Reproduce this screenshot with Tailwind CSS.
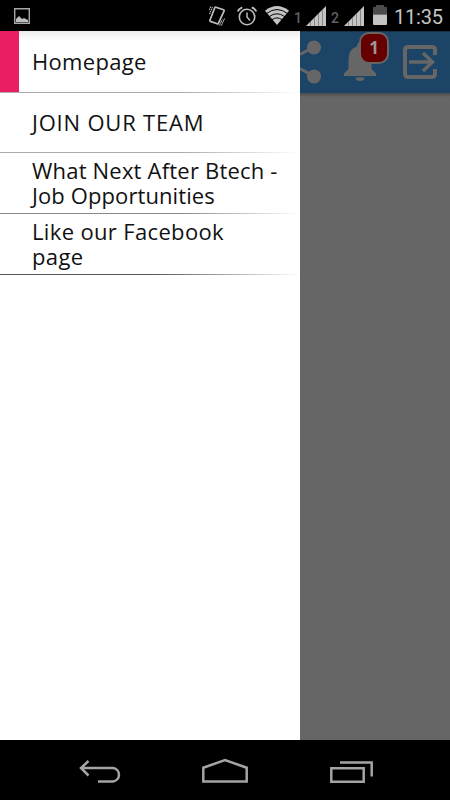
<!DOCTYPE html>
<html lang="en">
<head>
    <meta charset="UTF-8">
    <meta name="viewport" content="width=device-width, initial-scale=1.0">
    <title>Homepage</title>
    <script src="https://cdn.jsdelivr.net/npm/@tailwindcss/browser@4"></script>
</head>
<body class="w-[450px] h-[800px] overflow-hidden bg-black flex flex-col font-['Open_Sans',sans-serif]">
    <!-- Status bar -->
    <header class="h-[31px] shrink-0 bg-black flex items-start text-[#c4c4c4] font-[Roboto,sans-serif]">
        <svg class="w-4 h-4 ml-[14px] mt-2" viewBox="0 0 16 16">
            <path d="M.7.7h14.6v14.6H.7z" fill="none" stroke="#a8a8a8" stroke-width="1.4"/>
            <path d="M2 14v-3l2-2 1-1 2 2 1 1 2-1 2 1 2 1v2z" fill="#bdbdbd"/>
        </svg>
        <svg class="w-[18px] h-[22px] ml-[178px] mt-[5px]" viewBox="0 0 18 22" fill="none" stroke="#bdbdbd">
            <path d="M8 2.2l7.5 2.6q1 .4.5 1.4l-5.500 12q-.4 1-1.400.6L2.500 16.400q-1-.4-.5-1.400L6.700 3Q7 1.900 8 2.200z" stroke-width="1.700"/>
            <path d="M4.500 2L1.500 9M2.700 1.500L1 5.500M13.500 20.500l3-7M11.500 20.500l3-6" stroke-width="1.100" stroke-dasharray="1.500 .6"/>
        </svg>
        <svg class="w-5 h-5 ml-[11px] mt-[6px]" viewBox="0 0 20 20" fill="none" stroke="#bdbdbd">
            <circle cx="10" cy="11" r="7.700" stroke-width="1.600"/>
            <path d="M10 6.500V11l3 3.500" stroke-width="1.500"/>
            <path d="M.7 5.500Q2 2.500 5.300 1.400M19.300 5.500Q18 2.500 14.700 1.400" stroke-width="1.800"/>
        </svg>
        <svg class="w-6 h-[19px] ml-[8px] mt-[6px]" viewBox="0 0 24 19">
            <path d="M0 4.700Q12-4.500 24 4.700L12 19z" fill="#c4c4c4"/>
            <path d="M1.800 7.300Q12-.2 22.200 7.300M4.400 10.500Q12 5 19.600 10.500M7 13.600Q12 10.200 17 13.600" fill="none" stroke="#000" stroke-width="1"/>
        </svg>
        <span class="w-[8px] ml-[5px] mt-[10px] text-sm leading-4 font-medium text-[#606060]">1</span>
        <svg class="w-5 h-5 ml-[4px] mt-[6px]" viewBox="0 0 20 20">
            <path d="M0 20L20 0v20z" fill="#c4c4c4"/>
            <path d="M4.500 16v4M8.500 12v8M12.500 8v12M16.500 4v16" stroke="#777" stroke-width=".8"/>
        </svg>
        <span class="w-[9px] ml-[5px] mt-[10px] text-sm leading-4 font-medium text-[#606060]">2</span>
        <svg class="w-5 h-5 ml-[4px] mt-[6px]" viewBox="0 0 20 20">
            <path d="M0 20L20 0v20z" fill="#c4c4c4"/>
            <path d="M4.500 16v4M8.500 12v8M12.500 8v12M16.500 4v16" stroke="#777" stroke-width=".8"/>
        </svg>
        <svg class="w-[14px] h-5 ml-[9px] mt-[5px]" viewBox="0 0 14 20">
            <path d="M0 2h3V0h8v2h3v7.500H0z" fill="#4c4c4c"/>
            <path d="M0 9.500h14V19q0 1-1 1H1q-1 0-1-1z" fill="#c4c4c4"/>
        </svg>
        <span class="ml-[7px] mt-[6px] text-[20px] leading-[22px] tracking-[-0.2px] whitespace-nowrap">11:35</span>
    </header>

    <main class="h-[709px] shrink-0 flex">
        <!-- Drawer -->
        <nav class="w-[300px] shrink-0 bg-white text-[22px] leading-[25px] text-[#111] bg-linear-to-b from-[#ececec] from-0% to-white to-[10px]">
            <a class="h-[61px] flex items-stretch">
                <span class="w-[19px] mr-[13px] bg-[#e91e63]"></span>
                <span class="self-center tracking-[0.3px]">Homepage</span>
            </a>
            <div class="h-px bg-linear-to-r from-[#aaa] from-60% to-white"></div>
            <a class="h-[59px] pl-8 flex items-center tracking-[0.8px]">JOIN OUR TEAM</a>
            <div class="h-px bg-linear-to-r from-[#aaa] from-60% to-white"></div>
            <a class="h-[60px] pl-8 flex flex-col justify-center whitespace-nowrap">
                <span class="tracking-[0.2px]">What Next After Btech -</span>
                <span class="tracking-[0.1px]">Job Opportunities</span>
            </a>
            <div class="h-px bg-linear-to-r from-[#888] from-60% to-white"></div>
            <a class="h-[60px] pl-8 flex flex-col justify-center whitespace-nowrap tracking-[0.35px]">
                <span>Like our Facebook</span>
                <span>page</span>
            </a>
            <div class="h-px bg-linear-to-r from-[#555] from-50% to-white"></div>
        </nav>

        <!-- Dimmed page behind the drawer -->
        <section class="w-[150px] bg-[#666]">
            <div class="h-[62px] bg-[#1c4466] border-t border-[#153249] flex items-start">
                <svg class="w-[21px] h-[44px] mt-[8px]" viewBox="0 0 21 44" fill="#666">
                    <path d="M0 14.500L14 7M0 28.500l14 8" stroke="#666" stroke-width="3"/>
                    <circle cx="14" cy="7.500" r="7"/><circle cx="14" cy="36.500" r="7"/>
                </svg>
                <div class="relative w-[34px] h-[40px] ml-[22px] mt-[9px]">
                    <svg class="w-[34px] h-[40px]" viewBox="0 0 34 40" fill="#666">
                        <path d="M17 1.500q3 0 3 4Q28.500 8 28.500 18v10l4.500 4.500V35H1v-2.500L5.500 28V18Q5.500 8 14 5.500q0-4 3-4zM12.500 36.500h9q-.5 3.500-4.500 3.500t-4.500-3.500z"/>
                    </svg>
                    <span class="absolute left-[16px] -top-[9px] w-[30px] h-[32px] rounded-[10px] border-2 border-[#666] bg-[#660000] text-[#999] text-[17px] font-bold flex items-center justify-center">1</span>
                </div>
                <svg class="w-[34px] h-[34px] ml-[26px] mt-[13px]" viewBox="0 0 34 34" fill="none" stroke="#666" stroke-width="4">
                    <path d="M32 10V5q0-3-3-3H5Q2 2 2 5v24q0 3 3 3h24q3 0 3-3v-5"/>
                    <path d="M6 17h23M20 8l9.500 9L20 26" stroke-width="3.500"/>
                </svg>
            </div>
            <div class="h-1 bg-linear-to-b from-[#4c4c4c] to-[#666]"></div>
        </section>
    </main>

    <!-- Navigation bar -->
    <footer class="h-[60px] shrink-0 bg-black flex items-start">
        <svg class="w-[42px] h-[23px] ml-[79px] mt-[20px]" viewBox="0 0 42 23" fill="none" stroke="#a4a4a4" stroke-width="2.500">
            <path d="M19 21.500h15a6.800 6.800 0 0 0 0-13.500H2M9.500 1L2 8l7.500 7.500"/>
        </svg>
        <svg class="w-[46px] h-[25px] ml-[81px] mt-[18px]" viewBox="0 0 46 25" fill="none" stroke="#a4a4a4" stroke-width="2.500">
            <path d="M1.300 23.500V9.700L23 2l21.700 7.700v13.800z"/>
        </svg>
        <svg class="w-[43px] h-[23px] ml-[82px] mt-[20px]" viewBox="0 0 43 23" fill="none" stroke="#a4a4a4" stroke-width="2.500">
            <path d="M1.300 8.200h32.400v13.500H1.300zM10 2.500h31.700v14"/>
        </svg>
    </footer>
</body>
</html>
